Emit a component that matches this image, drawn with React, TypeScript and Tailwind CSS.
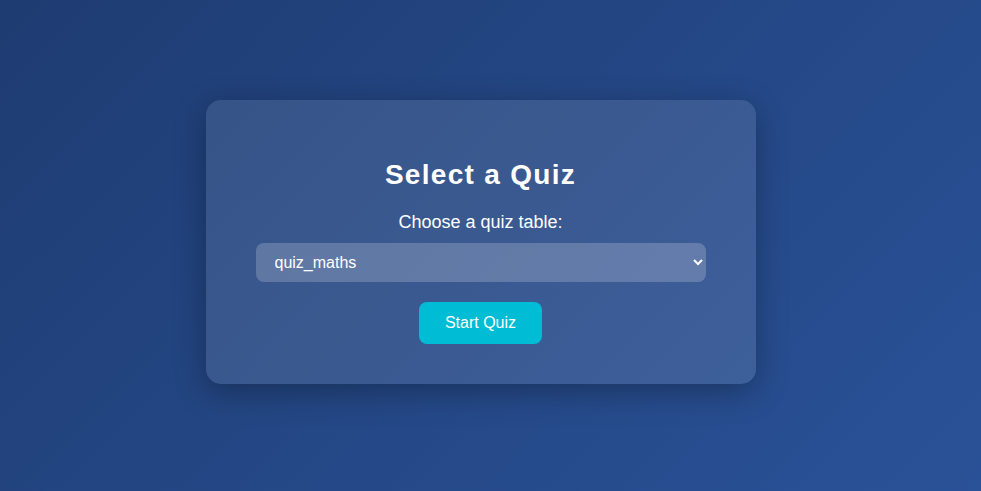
import { useState } from "react"

export default function App() {
  const [table, setTable] = useState("quiz_maths")

  return (
    <div className="min-h-screen flex items-center justify-center bg-[linear-gradient(135deg,#1e3c72,#2a5298)] font-['Liberation_Sans',Arial,sans-serif] pb-[7px] pr-[20px]">
      <div className="w-[550px] px-[50px] pt-[59px] pb-[40px] rounded-[15px] bg-white/10 shadow-[0_8px_32px_rgba(0,0,0,0.3)] text-center text-white">
        <h2 className="text-[28px] font-bold leading-[32px] tracking-[1.3px] mb-[21px]">Select a Quiz</h2>
        <label htmlFor="table" className="block text-[18px] leading-[21px] mb-[10px]">
          Choose a quiz table:
        </label>
        <select
          id="table"
          value={table}
          onChange={(e) => setTable(e.target.value)}
          className="block w-full h-[39px] px-[15px] rounded-[8px] bg-white/20 text-white text-[16px] outline-none border-none"
        >
          <option className="text-black" value="quiz_maths">quiz_maths</option>
          <option className="text-black" value="quiz_science">quiz_science</option>
          <option className="text-black" value="quiz_history">quiz_history</option>
        </select>
        <button className="mt-[20px] h-[42px] px-[26px] rounded-[8px] bg-[#00bcd4] text-white text-[16px]">
          Start Quiz
        </button>
      </div>
    </div>
  )
}
